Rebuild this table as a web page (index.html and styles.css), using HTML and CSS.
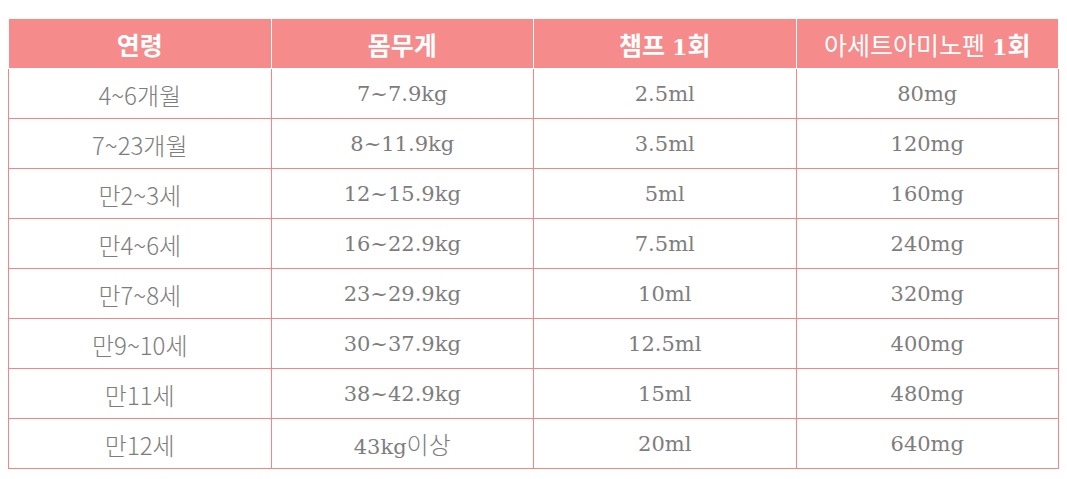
FILE: index.html
```html
<!DOCTYPE html>
<html lang="ko">
<head>
<meta charset="utf-8">
<link rel="stylesheet" href="styles.css">
</head>
<body>
<table class="dose">
  <thead>
    <tr>
      <th class="kr">연령</th>
      <th class="kr">몸무게</th>
      <th class="kr">챔프 <span class="num">1</span>회</th>
      <th class="kr"><span class="light">아세트아미노펜</span> <span class="num">1</span>회</th>
    </tr>
  </thead>
  <tbody>
    <tr><td class="age">4~6개월</td><td>7~7.9kg</td><td>2.5ml</td><td>80mg</td></tr>
    <tr><td class="age">7~23개월</td><td>8~11.9kg</td><td>3.5ml</td><td>120mg</td></tr>
    <tr><td class="age">만2~3세</td><td>12~15.9kg</td><td>5ml</td><td>160mg</td></tr>
    <tr><td class="age">만4~6세</td><td>16~22.9kg</td><td>7.5ml</td><td>240mg</td></tr>
    <tr><td class="age">만7~8세</td><td>23~29.9kg</td><td>10ml</td><td>320mg</td></tr>
    <tr><td class="age">만9~10세</td><td>30~37.9kg</td><td>12.5ml</td><td>400mg</td></tr>
    <tr><td class="age">만11세</td><td>38~42.9kg</td><td>15ml</td><td>480mg</td></tr>
    <tr><td class="age">만12세</td><td>43kg<span class="ko">이상</span></td><td>20ml</td><td>640mg</td></tr>
  </tbody>
</table>
</body>
</html>
```
FILE: styles.css
```css
html, body {
  margin: 0;
  padding: 0;
  background: #ffffff;
}
body {
  padding: 18px 8px 8px 8px;
}
.dose {
  width: 100%;
  border-collapse: collapse;
  table-layout: fixed;
  font-family: "DejaVu Serif", "Noto Sans CJK KR", serif;
  font-size: 21px;
  color: #7d7d7d;
}
.dose th {
  background: #f58b8b;
  color: #ffffff;
  height: 49px;
  padding: 0;
  border: 1px solid #ffffff;
  font-weight: 700;
  text-align: center;
  vertical-align: middle;
}
.dose th.kr {
  font-family: "Noto Sans CJK KR", sans-serif;
  font-size: 25px;
}
.dose th .num {
  font-family: "DejaVu Serif", serif;
  font-size: 22px;
  font-weight: 700;
}
.dose th .light {
  font-weight: 400;
}
.dose td {
  height: 47px;
  padding: 2px 0 0 0;
  border: 1px solid #f38585;
  text-align: center;
  vertical-align: middle;
  line-height: 1;
}
.dose td.age {
  font-family: "Noto Sans CJK KR", sans-serif;
  font-size: 24px;
  font-weight: 300;
}
.dose td .ko {
  font-family: "Noto Sans CJK KR", sans-serif;
  font-size: 24px;
  font-weight: 300;
}
```
